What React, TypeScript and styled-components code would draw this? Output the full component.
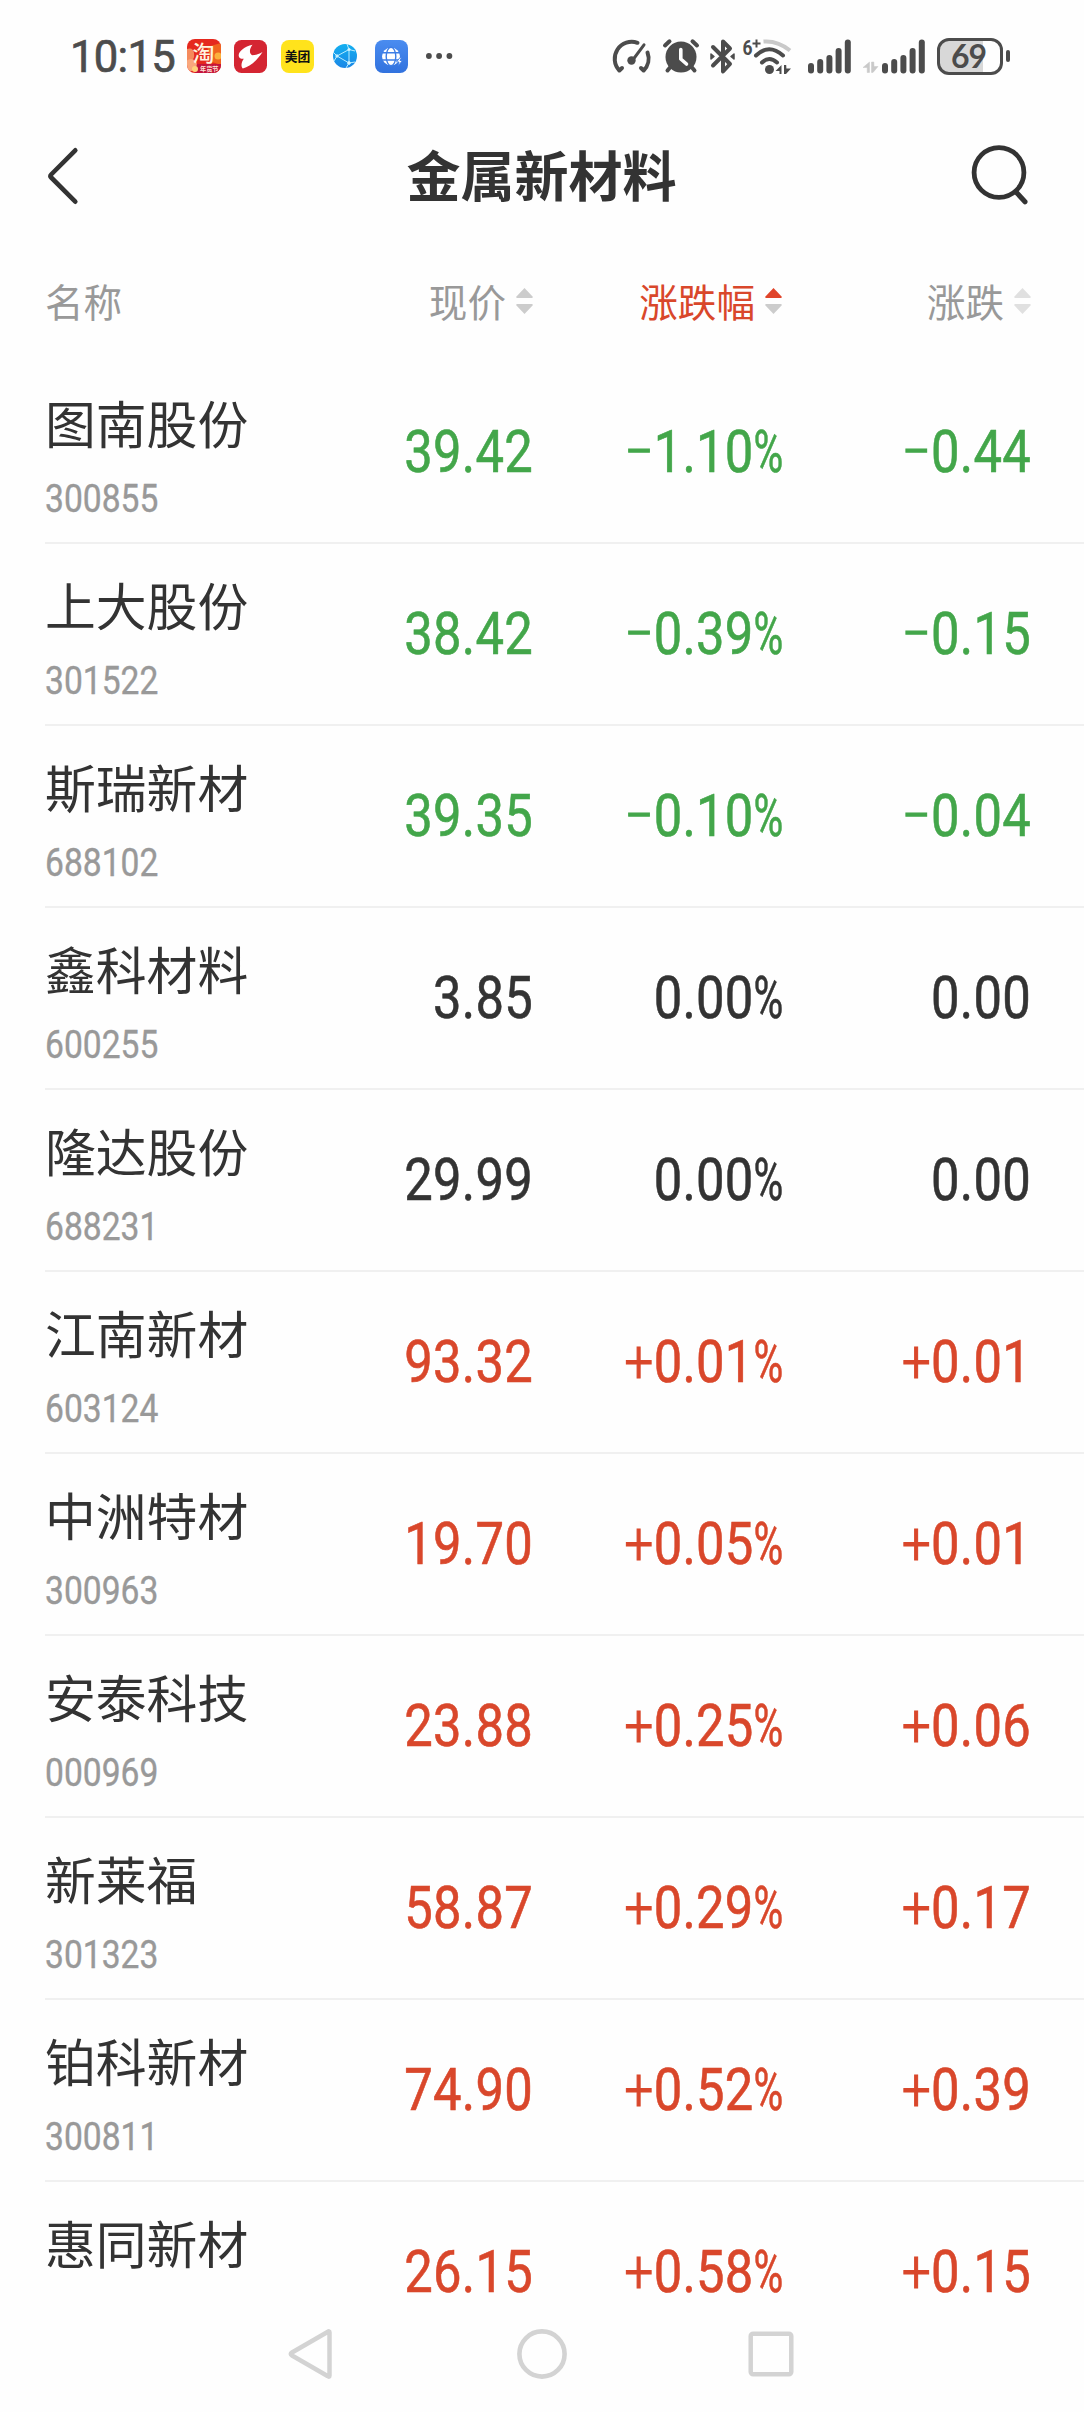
import React from 'react';
import styled, { createGlobalStyle } from 'styled-components';

const INK = '#333333';
const STATUS = '#4c4c4c';
const GREY = '#999999';
const RED = '#d9472b';
const GREEN = '#43a64a';

const CJK = '"Noto Sans CJK SC", sans-serif';
const DIGITS = 'Roboto, "Noto Sans", sans-serif';

const GlobalStyle = createGlobalStyle`
  body { margin: 0; background: #fefefe; }
  * { box-sizing: border-box; }
`;

const Screen = styled.div`
  width: 1084px;
  height: 2412px;
  display: flex;
  flex-direction: column;
  overflow: hidden;
  background: #fefefe;
  color: ${INK};
  font-family: ${CJK};
`;

const StatusBar = styled.header`
  height: 112px;
  padding: 0 74px 0 70px;
  display: flex;
  align-items: center;
  justify-content: space-between;
  color: ${STATUS};
`;

const StatusGroup = styled.div`
  display: flex;
  align-items: center;
  svg { display: block; overflow: visible; }
`;

const Clock = styled.span`
  font: 400 43.600px/50px ${DIGITS};
  letter-spacing: -0.7px;
  width: 117px;
  padding-top: 3px;
  -webkit-text-stroke: 0.7px ${STATUS};
`;

const Slot = styled.span<{ $gap?: number }>`
  margin-left: ${p => p.$gap ?? 0}px;
  display: block;
`;

const Battery = styled.div`
  width: 66px;
  height: 37px;
  margin-left: 12px;
  border: 3px solid ${STATUS};
  border-radius: 12px;
  background: linear-gradient(90deg, #d8d8d8 0 43px, transparent 43px);
  display: flex;
  align-items: center;
  justify-content: center;
  font: 700 32px/31px Lato, sans-serif;
  letter-spacing: -1px;
  padding: 0 3px 2px 0;
`;

const BatteryTip = styled.div`
  width: 4px;
  height: 12px;
  margin-left: 3px;
  border-radius: 2px;
  background: ${STATUS};
`;

const TitleBar = styled.div`
  height: 128px;
  padding: 0 56px 0 46px;
  display: grid;
  grid-template-columns: 58px 1fr 58px;
  align-items: center;
  svg { display: block; overflow: visible; }
`;

const Title = styled.h1`
  margin: 0;
  padding: 0 0 4px 9px;
  text-align: center;
  font: 700 54px/80px ${CJK};
`;

const columns = `
  display: grid;
  grid-template-columns: 200px 288px 249px 249px;
  margin-left: 45px;
`;

const ColumnHeads = styled.div`
  ${columns}
  height: 122px;
  align-items: center;
  font: 400 38.6px/56px ${CJK};
  color: ${GREY};
`;

const Head = styled.div<{ $active?: boolean; $end?: boolean }>`
  display: flex;
  align-items: center;
  justify-content: ${p => (p.$end ? 'flex-end' : 'flex-start')};
  gap: 10px;
  color: ${p => (p.$active ? RED : GREY)};
  padding-bottom: 2px;
  svg { display: block; margin-top: 2px; }
`;

const List = styled.main`
  height: 1940px;
`;

const Row = styled.div`
  ${columns}
  height: 182px;
  border-bottom: 2px solid #f0f0f0;
  &:last-child { height: 120px; border-bottom: 0; }
`;

const Stock = styled.div`
  padding-top: 30px;
  display: flex;
  flex-direction: column;
  gap: 27px;
  white-space: nowrap;
`;

const Name = styled.span`
  font: 400 50.8px/60px ${CJK};
`;

const Code = styled.span`
  font: 400 39.4px/40px ${DIGITS};
  color: ${GREY};
  transform: scaleX(0.853);
  transform-origin: left;
  -webkit-text-stroke: 0.4px ${GREY};
`;

const Value = styled.div<{ $color: string }>`
  display: flex;
  align-items: flex-start;
  justify-content: flex-end;
  padding-top: 60px;
  font: 400 59px/60px ${DIGITS};
  letter-spacing: 0.3px;
  color: ${p => p.$color};
  transform: scaleX(0.86);
  transform-origin: right;
  -webkit-text-stroke: 0.6px ${p => p.$color};
`;

const Sign = styled.span`
  width: 34px;
  text-align: center;
  font-weight: 300;
  -webkit-text-stroke-width: 1.2px;
`;

const Percent = styled.span`
  width: 33px;
  transform: scaleX(0.8);
  transform-origin: left;
`;

const NavBar = styled.nav`
  height: 110px;
  padding: 0 290px 6px 288px;
  display: grid;
  grid-template-columns: 229px 1fr 46px;
  align-items: center;
  svg { display: block; }
`;

const Sort = ({ up = '#cccccc', down = '#cccccc' }: { up?: string; down?: string }) => (
  <svg width="17" height="26" viewBox="0 0 17 26">
    <path d="M8.500 0 16.800 8.700Q17 10 15.800 10H1.200Q0 10 .2 8.700Z" fill={up} />
    <path d="M8.500 26 16.800 17.300Q17 16 15.800 16H1.200Q0 16 .2 17.300Z" fill={down} />
  </svg>
);

const Taobao = () => (
  <svg width="34" height="34" viewBox="0 0 34 34">
    <defs>
      <clipPath id="tb"><rect width="34" height="34" rx="8" /></clipPath>
    </defs>
    <g clipPath="url(#tb)">
      <rect width="34" height="34" fill="#e5281e" />
      <path d="M20 8 34 4v22l-9-3Z" fill="#f0641f" />
      <path d="M0 10q6-2 7 4t-3 8H0Z" fill="#f58a5c" />
      <circle cx="31" cy="17" r="3.500" fill="#fbb13c" />
      <circle cx="4" cy="26" r="6" fill="#f9a77c" />
      <path d="M10 25h24v9H8Z" fill="#c4143c" />
      <circle cx="8" cy="30" r="3" fill="#ffd27a" />
      <text x="5.500" y="21.500" fontSize="22" fontWeight="500" fill="#fff3df" fontFamily="Noto Sans CJK SC">淘</text>
      <text x="13" y="31.500" fontSize="6.200" fontWeight="700" fill="#ffe6d8" fontFamily="Noto Sans CJK SC">年货节</text>
    </g>
  </svg>
);

const RedBird = () => (
  <svg width="33" height="33" viewBox="0 0 33 33">
    <rect width="33" height="33" rx="7.500" fill="#d42532" />
    <path d="M18.500 4.700C10 6.500 3.800 12 4.800 16.200c.5 2.300 2.700 2.800 5 2.500C7.500 22 6.500 26 8.800 28.500c7-2 14-7.500 19.700-16.500-3.500 2-6.500 3.200-10 3.200-2.800-1-4-5 0-10.500Z" fill="#fff" />
  </svg>
);

const Meituan = () => (
  <svg width="33" height="33" viewBox="0 0 33 33">
    <rect width="33" height="33" rx="8" fill="#ffe31c" />
    <text x="3.700" y="21.100" fontSize="12.800" fontWeight="700" fill="#111" fontFamily="Noto Sans CJK SC">美团</text>
  </svg>
);

const Network = () => (
  <svg width="24" height="24" viewBox="0 0 24 24">
    <defs>
      <linearGradient id="nw" x1="0" y1="0" x2="0" y2="1">
        <stop offset="0" stopColor="#14b0f0" />
        <stop offset="1" stopColor="#1a86e6" />
      </linearGradient>
    </defs>
    <circle cx="12" cy="12" r="12" fill="url(#nw)" />
    <g stroke="#b9ecff" strokeWidth="1" fill="#e6faff">
      <path d="M0 8 4 12 16 5.500 22 7M4 12 1 17M4 12 16 19 22 18M16 5.500V19M14 0l2 5.500M16 19l-3 5" fill="none" />
      <circle cx="4" cy="12" r="1.200" /><circle cx="16" cy="5.500" r="1.200" /><circle cx="16" cy="19" r="1.400" />
    </g>
  </svg>
);

const Globe = () => (
  <svg width="33" height="33" viewBox="0 0 33 33">
    <defs>
      <linearGradient id="gl" x1="0" y1="0" x2="0" y2="1">
        <stop offset="0" stopColor="#4a8cf0" />
        <stop offset="1" stopColor="#3172de" />
      </linearGradient>
    </defs>
    <rect width="33" height="33" rx="8" fill="url(#gl)" />
    <circle cx="16" cy="16.500" r="9" fill="#fff" />
    <g stroke="#3d7ee6" strokeWidth="1.400" fill="none">
      <path d="M7 12.800h18M7 20h18" />
      <ellipse cx="16" cy="16.500" rx="4.800" ry="9.200" />
    </g>
    <path d="M25 17.500 21.500 22H24l-1 4 4.500-5.500H25l1.500-3Z" fill="#fff" stroke="#3d7ee6" strokeWidth=".9" />
  </svg>
);

const More = () => (
  <svg width="26" height="6" viewBox="0 0 26 6" fill={STATUS}>
    <circle cx="2.900" cy="3" r="2.900" /><circle cx="13.100" cy="3" r="2.900" /><circle cx="23.400" cy="3" r="2.900" />
  </svg>
);

const Gauge = () => (
  <svg width="39" height="34" viewBox="0 0 39 34" fill="none" stroke={STATUS} strokeLinecap="round">
    <path d="M25.500 3.800A17 17 0 0 0 7.400 31.500L10 29" strokeWidth="4" strokeLinejoin="round" />
    <path d="M35.500 13.500A17 17 0 0 1 31.600 31.500L29 29" strokeWidth="4" strokeLinejoin="round" />
    <path d="M20 22 32 5.800" strokeWidth="3" />
    <circle cx="19.500" cy="21.500" r="4.200" fill={STATUS} stroke="none" />
  </svg>
);

const Alarm = () => (
  <svg width="36" height="34" viewBox="0 0 36 34" fill="none" stroke={STATUS} strokeLinecap="round">
    <circle cx="18" cy="18" r="15.500" fill={STATUS} stroke="none" />
    <path d="m2 6.500 4.500-4.200M34 6.500l-4.500-4.200M7 28.500 4.500 31.500M29 28.500l2.500 3" strokeWidth="4" />
    <path d="M17.800 10.500v9.500l5.700 5" stroke="#fefefe" strokeWidth="3.600" strokeLinejoin="round" />
  </svg>
);

const Bluetooth = () => (
  <svg width="25" height="35" viewBox="0 0 25 35" fill="none" stroke={STATUS} strokeLinecap="round" strokeLinejoin="round">
    <path d="M3 8 20 25 13 32.500V2.500L20 9.500 3 26.500" strokeWidth="4" />
    <path d="M1 15v5l3-2.500ZM24 15v5l-3-2.500Z" fill={STATUS} strokeWidth="1.500" />
  </svg>
);

const Wifi = () => (
  <svg width="49" height="37" viewBox="0 0 49 37" fill="none">
    <text x="-.5" y="16.500" fontFamily="Roboto" fontSize="21" fontWeight="700" fill={STATUS} textLength="10" lengthAdjust="spacingAndGlyphs">6</text>
    <path d="M9.500 5.500h8M13.500 1.500v8" stroke={STATUS} strokeWidth="2" />
    <path d="M20.500 3.500q14.500-1 26.500 9" stroke="#c9c9c9" strokeWidth="4" />
    <g stroke={STATUS} strokeWidth="4" strokeLinecap="round">
      <path d="M13 17.500q13-12.500 27 0M19 24.500q7-7 15 0" />
    </g>
    <circle cx="26.500" cy="31.500" r="4.500" fill={STATUS} />
    <path d="M38.500 27v9h-2v-3h-4ZM41 27h2.200l.2 3.500h4.600L43 36h-2Z" fill={STATUS} />
  </svg>
);

const bars = [10.5, 14.5, 18.5, 25.5, 34];

const Signal = () => (
  <svg width="43" height="35" viewBox="0 0 43 35" fill={STATUS}>
    {bars.map((h, i) => (
      <rect key={h} x={i * 9.2} y={34.5 - h} width="6" height={h} rx="3" />
    ))}
  </svg>
);

const DataArrows = () => (
  <svg width="15" height="35" viewBox="0 0 15 35">
    <path d="M6.500 23v10.500H4.200v-5H0ZM8.500 23h2.300l.2 4.500H15L10 33.500H8.500Z" fill="#c9c9c9" stroke="#c9c9c9" strokeWidth=".5" />
  </svg>
);

const stocks: [string, string, string, string, string][] = [
  ['图南股份', '300855', '39.42', '−1.10', '−0.44'],
  ['上大股份', '301522', '38.42', '−0.39', '−0.15'],
  ['斯瑞新材', '688102', '39.35', '−0.10', '−0.04'],
  ['鑫科材料', '600255', '3.85', '0.00', '0.00'],
  ['隆达股份', '688231', '29.99', '0.00', '0.00'],
  ['江南新材', '603124', '93.32', '+0.01', '+0.01'],
  ['中洲特材', '300963', '19.70', '+0.05', '+0.01'],
  ['安泰科技', '000969', '23.88', '+0.25', '+0.06'],
  ['新莱福', '301323', '58.87', '+0.29', '+0.17'],
  ['铂科新材', '300811', '74.90', '+0.52', '+0.39'],
  ['惠同新材', '', '26.15', '+0.58', '+0.15'],
];

const tone = (change: string) =>
  change.startsWith('+') ? RED : change.startsWith('−') ? GREEN : INK;

const Signed = ({ text }: { text: string }) =>
  /^[+−]/.test(text) ? <><Sign>{text[0]}</Sign>{text.slice(1)}</> : <>{text}</>;

export default function App() {
  return (
    <Screen>
      <GlobalStyle />
      <StatusBar>
        <StatusGroup>
          <Clock>10:15</Clock>
          <Slot><Taobao /></Slot>
          <Slot $gap={13}><RedBird /></Slot>
          <Slot $gap={14}><Meituan /></Slot>
          <Slot $gap={19}><Network /></Slot>
          <Slot $gap={18}><Globe /></Slot>
          <Slot $gap={18}><More /></Slot>
        </StatusGroup>
        <StatusGroup>
          <Slot><Gauge /></Slot>
          <Slot $gap={12}><Alarm /></Slot>
          <Slot $gap={11}><Bluetooth /></Slot>
          <Slot $gap={8}><Wifi /></Slot>
          <Slot $gap={16}><Signal /></Slot>
          <Slot $gap={12}><DataArrows /></Slot>
          <Slot $gap={4}><Signal /></Slot>
          <Battery>69</Battery>
          <BatteryTip />
        </StatusGroup>
      </StatusBar>

      <TitleBar>
        <svg width="34" height="56" viewBox="0 0 34 56" fill="none" stroke={INK} strokeWidth="4.600" strokeLinecap="round" strokeLinejoin="round">
          <path d="M29.300 2.300 5.200 26.500q-1.500 1.500 0 3L29.300 53.700" />
        </svg>
        <Title>金属新材料</Title>
        <svg width="58" height="60" viewBox="0 0 58 60" fill="none" stroke={INK} strokeLinecap="round">
          <circle cx="29" cy="26.500" r="24.900" strokeWidth="4.800" />
          <path d="m46.500 46.500 8.500 9.300" strokeWidth="5" />
        </svg>
      </TitleBar>

      <ColumnHeads>
        <Head>名称</Head>
        <Head $end>现价<Sort /></Head>
        <Head $end $active>涨跌幅<Sort up="#e0442a" /></Head>
        <Head $end>涨跌<Sort up="#e0e0e0" down="#e0e0e0" /></Head>
      </ColumnHeads>

      <List>
        {stocks.map(([name, code, price, pct, change]) => (
          <Row key={name}>
            <Stock>
              <Name>{name}</Name>
              {code && <Code>{code}</Code>}
            </Stock>
            <Value $color={tone(change)}>{price}</Value>
            <Value $color={tone(change)}><Signed text={pct} /><Percent>%</Percent></Value>
            <Value $color={tone(change)}><Signed text={change} /></Value>
          </Row>
        ))}
      </List>

      <NavBar>
        <svg width="44" height="50" viewBox="0 0 44 50" fill="none" stroke="#d3d3d3" strokeWidth="4.500" strokeLinejoin="round">
          <path d="M41.500 3.500v43Q41.500 48.500 39.500 47L4 26.500Q1.500 25 4 23.500L39.500 3Q41.500 1.500 41.500 3.500Z" />
        </svg>
        <svg width="50" height="50" viewBox="0 0 50 50" fill="none" stroke="#d3d3d3" strokeWidth="4.600">
          <circle cx="25" cy="25" r="22.600" />
        </svg>
        <svg width="46" height="46" viewBox="0 0 46 46" fill="none" stroke="#d3d3d3" strokeWidth="4.500">
          <rect x="2.700" y="2.700" width="40.600" height="40.600" rx="2.500" />
        </svg>
      </NavBar>
    </Screen>
  );
}
